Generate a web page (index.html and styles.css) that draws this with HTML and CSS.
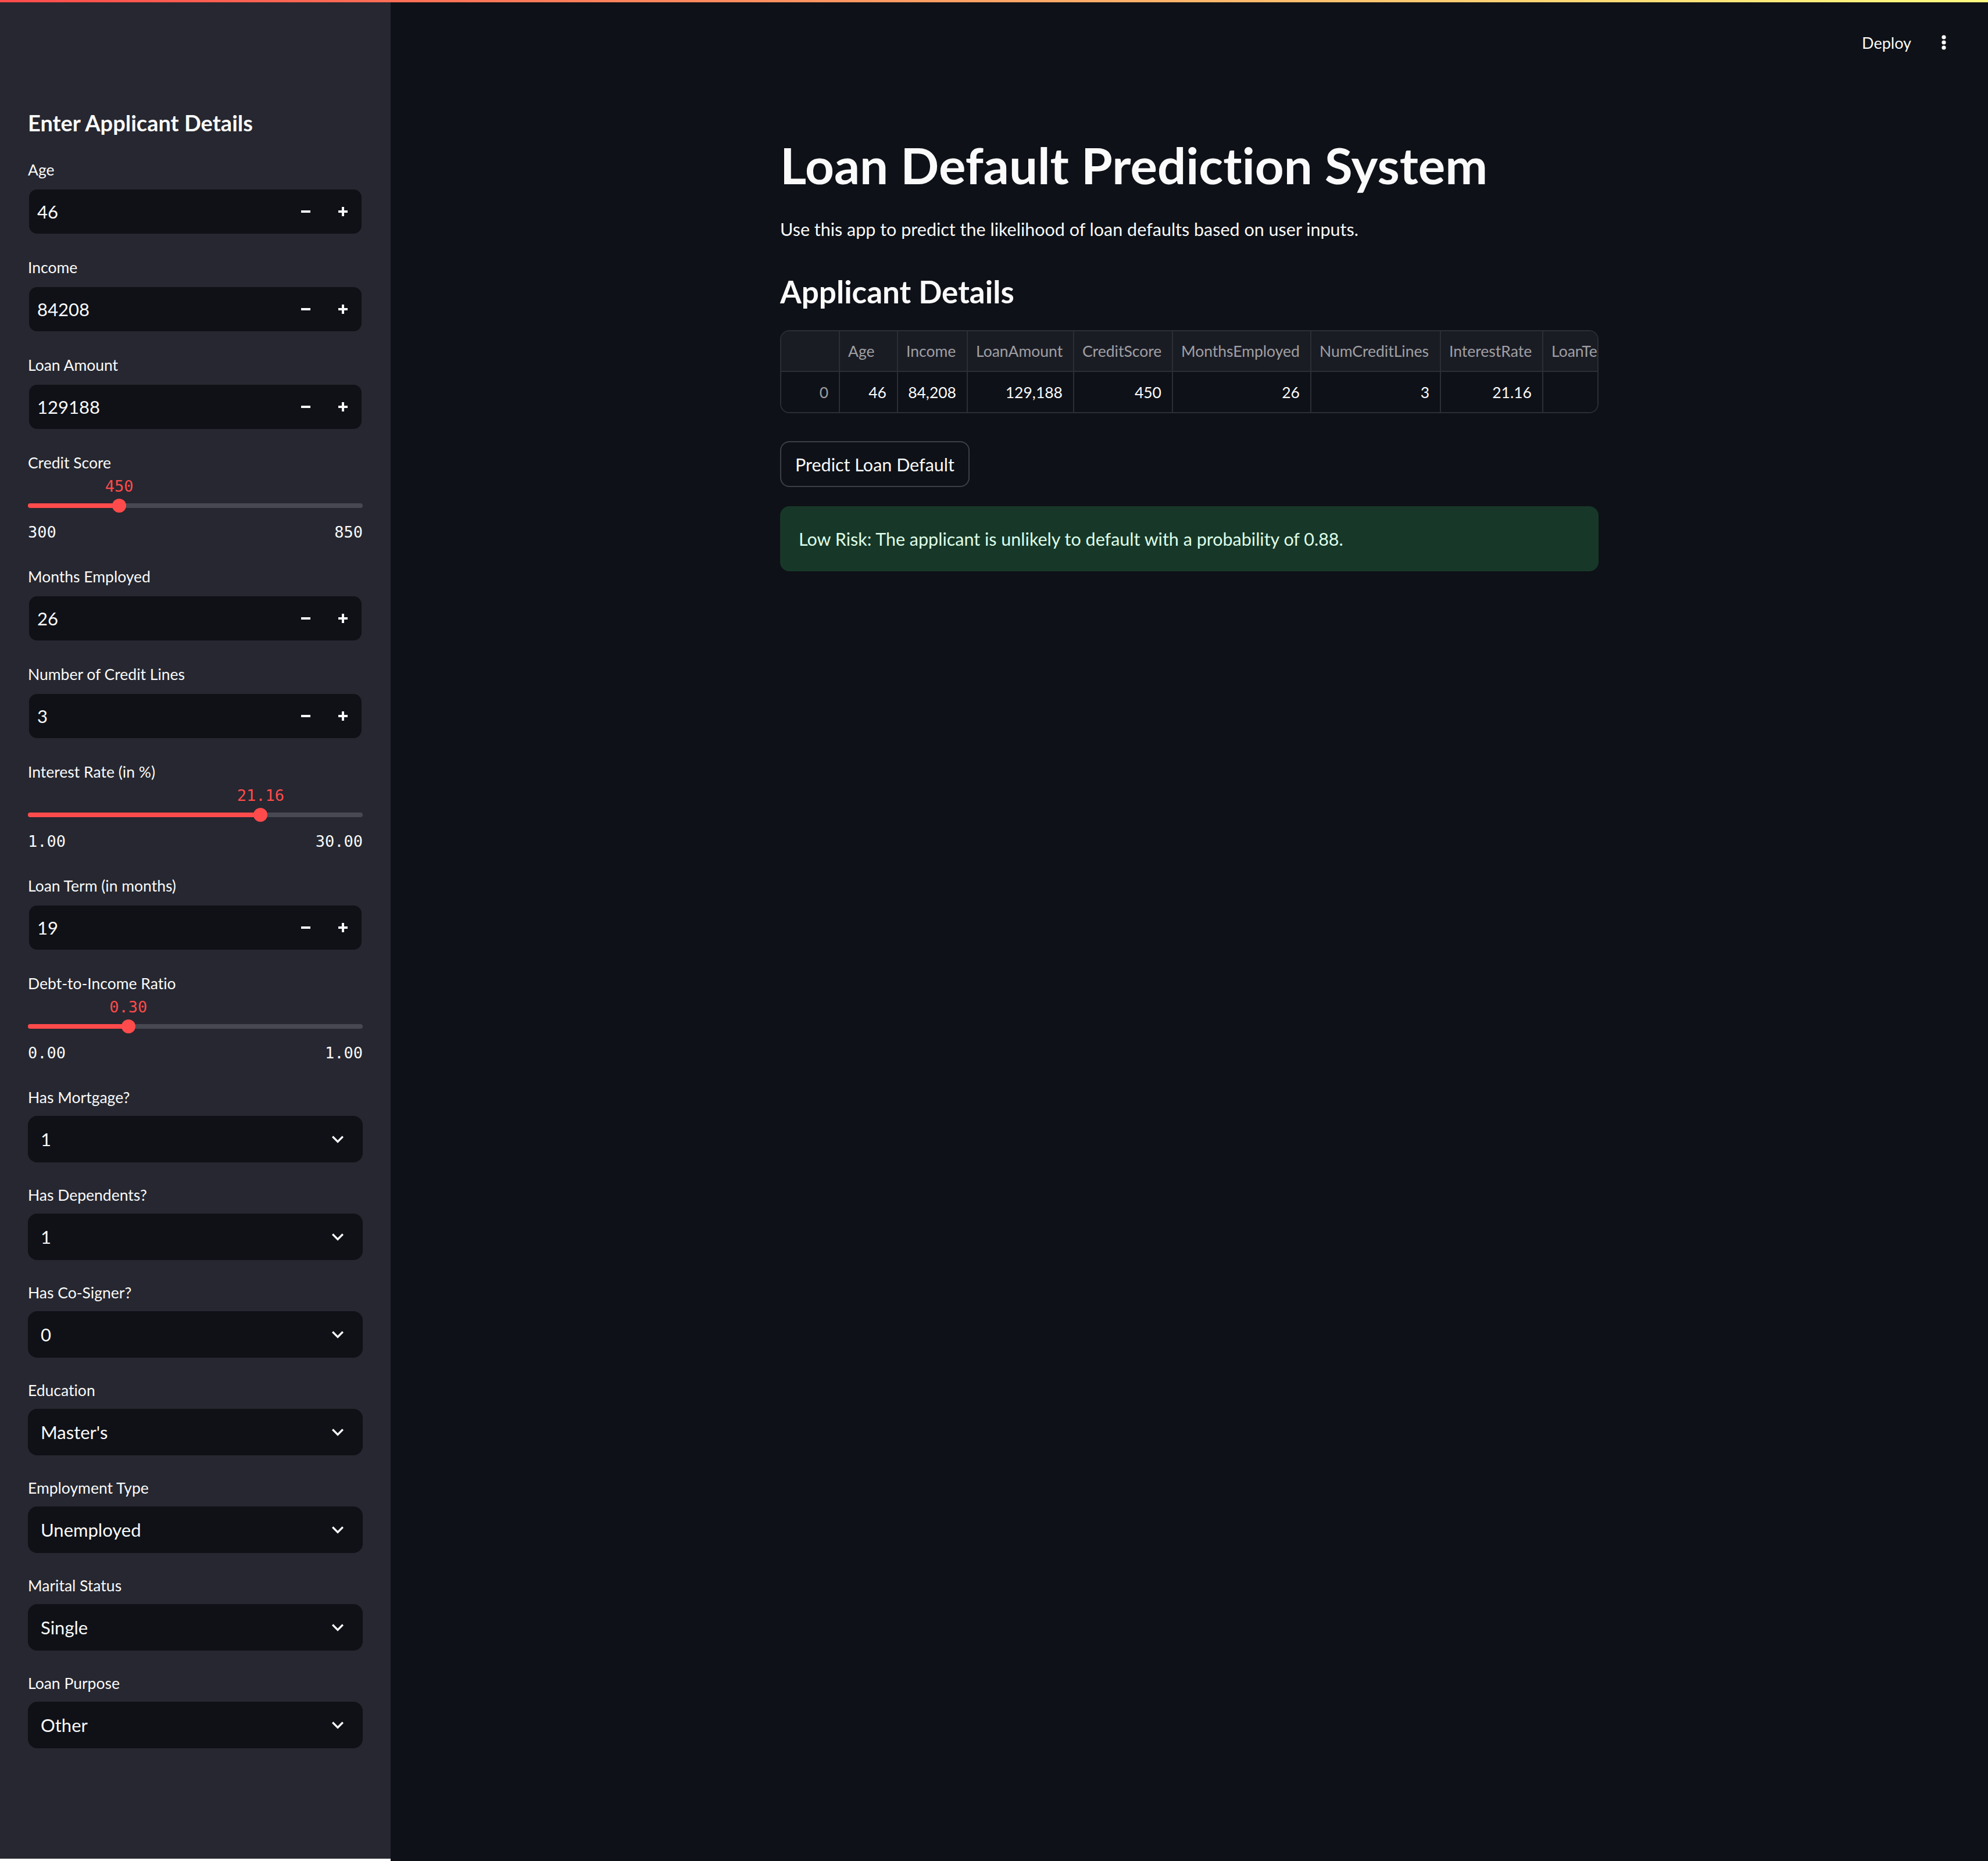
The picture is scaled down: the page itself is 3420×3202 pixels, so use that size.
FILE: index.html
```html
<!DOCTYPE html>
<html lang="en">
<head>
<meta charset="utf-8">
<title>Loan Default Prediction System</title>
<link rel="stylesheet" href="styles.css">
</head>
<body>
<div class="decoration"></div>
<div class="app">
  <aside class="sidebar">
    <h2 class="sb-title">Enter Applicant Details</h2>
    <div class="widgets">

      <div class="widget">
        <div class="label">Age</div>
        <div class="num-input">
          <span class="num-value">46</span>
          <span class="step"><svg width="16" height="16" viewBox="0 0 16 16"><rect x="0" y="6" width="16" height="4" fill="#fafafa"/></svg></span>
          <span class="step"><svg width="16" height="16" viewBox="0 0 16 16"><rect x="0" y="6" width="16" height="4" fill="#fafafa"/><rect x="6" y="0" width="4" height="16" fill="#fafafa"/></svg></span>
        </div>
      </div>

      <div class="widget">
        <div class="label">Income</div>
        <div class="num-input">
          <span class="num-value">84208</span>
          <span class="step"><svg width="16" height="16" viewBox="0 0 16 16"><rect x="0" y="6" width="16" height="4" fill="#fafafa"/></svg></span>
          <span class="step"><svg width="16" height="16" viewBox="0 0 16 16"><rect x="0" y="6" width="16" height="4" fill="#fafafa"/><rect x="6" y="0" width="4" height="16" fill="#fafafa"/></svg></span>
        </div>
      </div>

      <div class="widget">
        <div class="label">Loan Amount</div>
        <div class="num-input">
          <span class="num-value">129188</span>
          <span class="step"><svg width="16" height="16" viewBox="0 0 16 16"><rect x="0" y="6" width="16" height="4" fill="#fafafa"/></svg></span>
          <span class="step"><svg width="16" height="16" viewBox="0 0 16 16"><rect x="0" y="6" width="16" height="4" fill="#fafafa"/><rect x="6" y="0" width="4" height="16" fill="#fafafa"/></svg></span>
        </div>
      </div>

      <div class="widget">
        <div class="label">Credit Score</div>
        <div class="slider">
          <div class="s-top"><span class="s-val" style="left: 27.27%">450</span></div>
          <div class="s-rail">
            <div class="s-track"><div class="s-fill" style="width: 27.27%"></div></div>
            <div class="s-thumb" style="left: 27.27%"></div>
          </div>
          <div class="s-ticks"><span>300</span><span>850</span></div>
        </div>
      </div>

      <div class="widget">
        <div class="label">Months Employed</div>
        <div class="num-input">
          <span class="num-value">26</span>
          <span class="step"><svg width="16" height="16" viewBox="0 0 16 16"><rect x="0" y="6" width="16" height="4" fill="#fafafa"/></svg></span>
          <span class="step"><svg width="16" height="16" viewBox="0 0 16 16"><rect x="0" y="6" width="16" height="4" fill="#fafafa"/><rect x="6" y="0" width="4" height="16" fill="#fafafa"/></svg></span>
        </div>
      </div>

      <div class="widget">
        <div class="label">Number of Credit Lines</div>
        <div class="num-input">
          <span class="num-value">3</span>
          <span class="step"><svg width="16" height="16" viewBox="0 0 16 16"><rect x="0" y="6" width="16" height="4" fill="#fafafa"/></svg></span>
          <span class="step"><svg width="16" height="16" viewBox="0 0 16 16"><rect x="0" y="6" width="16" height="4" fill="#fafafa"/><rect x="6" y="0" width="4" height="16" fill="#fafafa"/></svg></span>
        </div>
      </div>

      <div class="widget">
        <div class="label">Interest Rate (in %)</div>
        <div class="slider">
          <div class="s-top"><span class="s-val" style="left: 69.52%">21.16</span></div>
          <div class="s-rail">
            <div class="s-track"><div class="s-fill" style="width: 69.52%"></div></div>
            <div class="s-thumb" style="left: 69.52%"></div>
          </div>
          <div class="s-ticks"><span>1.00</span><span>30.00</span></div>
        </div>
      </div>

      <div class="widget">
        <div class="label">Loan Term (in months)</div>
        <div class="num-input">
          <span class="num-value">19</span>
          <span class="step"><svg width="16" height="16" viewBox="0 0 16 16"><rect x="0" y="6" width="16" height="4" fill="#fafafa"/></svg></span>
          <span class="step"><svg width="16" height="16" viewBox="0 0 16 16"><rect x="0" y="6" width="16" height="4" fill="#fafafa"/><rect x="6" y="0" width="4" height="16" fill="#fafafa"/></svg></span>
        </div>
      </div>

      <div class="widget">
        <div class="label">Debt-to-Income Ratio</div>
        <div class="slider">
          <div class="s-top"><span class="s-val" style="left: 30%">0.30</span></div>
          <div class="s-rail">
            <div class="s-track"><div class="s-fill" style="width: 30%"></div></div>
            <div class="s-thumb" style="left: 30%"></div>
          </div>
          <div class="s-ticks"><span>0.00</span><span>1.00</span></div>
        </div>
      </div>

      <div class="widget">
        <div class="label">Has Mortgage?</div>
        <div class="select"><span class="sel-value">1</span><svg class="chev" width="40" height="40" viewBox="0 0 24 24"><path d="M16.59 8.59L12 13.17 7.41 8.59 6 10l6 6 6-6z" fill="#fafafa"/></svg></div>
      </div>

      <div class="widget">
        <div class="label">Has Dependents?</div>
        <div class="select"><span class="sel-value">1</span><svg class="chev" width="40" height="40" viewBox="0 0 24 24"><path d="M16.59 8.59L12 13.17 7.41 8.59 6 10l6 6 6-6z" fill="#fafafa"/></svg></div>
      </div>

      <div class="widget">
        <div class="label">Has Co-Signer?</div>
        <div class="select"><span class="sel-value">0</span><svg class="chev" width="40" height="40" viewBox="0 0 24 24"><path d="M16.59 8.59L12 13.17 7.41 8.59 6 10l6 6 6-6z" fill="#fafafa"/></svg></div>
      </div>

      <div class="widget">
        <div class="label">Education</div>
        <div class="select"><span class="sel-value">Master's</span><svg class="chev" width="40" height="40" viewBox="0 0 24 24"><path d="M16.59 8.59L12 13.17 7.41 8.59 6 10l6 6 6-6z" fill="#fafafa"/></svg></div>
      </div>

      <div class="widget">
        <div class="label">Employment Type</div>
        <div class="select"><span class="sel-value">Unemployed</span><svg class="chev" width="40" height="40" viewBox="0 0 24 24"><path d="M16.59 8.59L12 13.17 7.41 8.59 6 10l6 6 6-6z" fill="#fafafa"/></svg></div>
      </div>

      <div class="widget">
        <div class="label">Marital Status</div>
        <div class="select"><span class="sel-value">Single</span><svg class="chev" width="40" height="40" viewBox="0 0 24 24"><path d="M16.59 8.59L12 13.17 7.41 8.59 6 10l6 6 6-6z" fill="#fafafa"/></svg></div>
      </div>

      <div class="widget">
        <div class="label">Loan Purpose</div>
        <div class="select"><span class="sel-value">Other</span><svg class="chev" width="40" height="40" viewBox="0 0 24 24"><path d="M16.59 8.59L12 13.17 7.41 8.59 6 10l6 6 6-6z" fill="#fafafa"/></svg></div>
      </div>

    </div>
  </aside>

  <main class="main">
    <header class="topbar">
      <span class="deploy">Deploy</span>
      <svg class="kebab" width="8" height="26" viewBox="0 0 8 26"><circle cx="4" cy="4" r="3.6" fill="#fafafa"/><circle cx="4" cy="13" r="3.6" fill="#fafafa"/><circle cx="4" cy="22" r="3.6" fill="#fafafa"/></svg>
    </header>

    <div class="block">
      <h1 class="title">Loan Default Prediction System</h1>
      <p class="lead">Use this app to predict the likelihood of loan defaults based on user inputs.</p>
      <h3 class="subheader">Applicant Details</h3>

      <div class="df">
        <div class="th"></div>
        <div class="th">Age</div>
        <div class="th">Income</div>
        <div class="th">LoanAmount</div>
        <div class="th">CreditScore</div>
        <div class="th">MonthsEmployed</div>
        <div class="th">NumCreditLines</div>
        <div class="th">InterestRate</div>
        <div class="th th-cut">LoanTe</div>

        <div class="td idx">0</div>
        <div class="td">46</div>
        <div class="td">84,208</div>
        <div class="td">129,188</div>
        <div class="td">450</div>
        <div class="td">26</div>
        <div class="td">3</div>
        <div class="td">21.16</div>
        <div class="td"></div>
      </div>

      <button class="btn" type="button">Predict Loan Default</button>

      <div class="alert">Low Risk: The applicant is unlikely to default with a probability of 0.88.</div>
    </div>
  </main>
</div>
</body>
</html>
```

FILE: styles.css
```css
* {
  box-sizing: border-box;
}

html, body {
  margin: 0;
  padding: 0;
}

body {
  background: #0e1117;
  color: #fafafa;
  font-family: "Lato", "Noto Sans", sans-serif;
  font-variant-ligatures: none;
  height: 3202px;
  overflow: hidden;
}

.decoration {
  position: absolute;
  top: 0;
  left: 0;
  right: 0;
  height: 4px;
  background: linear-gradient(90deg, #ff4b4b, #fffd80);
  z-index: 10;
}

.app {
  display: flex;
  height: 3202px;
  background: #ffffff;
}

/* ---------- Sidebar ---------- */
.sidebar {
  width: 672px;
  flex: 0 0 672px;
  height: 3198px;
  background: #262730;
  padding: 190px 48px 0 48px;
}

.sb-title {
  margin: 0 0 36px 0;
  font-size: 38px;
  line-height: 42px;
  font-weight: 700;
  color: #fafafa;
}

.widgets {
  display: flex;
  flex-direction: column;
  gap: 32px;
}

.widget {
  display: flex;
  flex-direction: column;
}

.label {
  height: 56px;
  line-height: 48px;
  font-size: 26.5px;
  color: #fafafa;
  white-space: nowrap;
}

.num-input {
  height: 80px;
  display: flex;
  align-items: center;
  background: #0f1117;
  background-clip: padding-box;
  border: 2px solid transparent;
  border-radius: 16px;
  padding-left: 14px;
}

.num-value {
  flex: 1;
  font-size: 31px;
  color: #fafafa;
}

.step {
  width: 64px;
  height: 76px;
  display: flex;
  align-items: center;
  justify-content: center;
}

.step svg {
  display: block;
}

.select {
  height: 80px;
  display: flex;
  align-items: center;
  background: #0f1117;
  border-radius: 16px;
  padding: 0 23px 0 22px;
}

.sel-value {
  flex: 1;
  font-size: 31px;
  color: #fafafa;
}

.chev {
  display: block;
}

/* slider */
.slider {
  height: 108px;
  display: flex;
  flex-direction: column;
}

.s-top {
  position: relative;
  height: 30px;
}

.s-val {
  position: absolute;
  top: 0;
  transform: translateX(-50%);
  font-family: "DejaVu Sans Mono", "Liberation Mono", monospace;
  font-size: 27px;
  line-height: 17px;
  color: #ff4b4b;
  white-space: nowrap;
}

.s-rail {
  position: relative;
  height: 24px;
  display: flex;
  align-items: center;
}

.s-track {
  width: 100%;
  height: 8px;
  border-radius: 4px;
  background: #474852;
  overflow: hidden;
}

.s-fill {
  height: 100%;
  background: #ff4b4b;
}

.s-thumb {
  position: absolute;
  top: 0;
  width: 24px;
  height: 24px;
  border-radius: 50%;
  background: #ff4b4b;
  transform: translateX(-50%);
}

.s-ticks {
  margin-top: 17px;
  display: flex;
  justify-content: space-between;
  font-family: "DejaVu Sans Mono", "Liberation Mono", monospace;
  font-size: 27px;
  line-height: 34px;
  color: #fafafa;
}

/* ---------- Main ---------- */
.main {
  flex: 1;
  height: 3202px;
  background: #0e1117;
  display: flex;
  flex-direction: column;
}

.topbar {
  height: 146px;
  display: flex;
  align-items: center;
  justify-content: flex-end;
  padding-right: 72px;
}

.deploy {
  font-size: 27px;
  color: #fafafa;
  margin-right: 52px;
}

.kebab {
  display: block;
}

.block {
  width: 1408px;
  margin: 0 auto;
  display: flex;
  flex-direction: column;
  align-items: flex-start;
}

.title {
  margin: 86px 0 0 0;
  font-size: 87px;
  line-height: 104px;
  font-weight: 700;
  color: #fafafa;
  white-space: nowrap;
}

.lead {
  margin: 34px 0 0 0;
  font-size: 30.5px;
  line-height: 48px;
  color: #fafafa;
}

.subheader {
  margin: 50px 0 0 0;
  font-size: 53px;
  line-height: 68px;
  font-weight: 700;
  color: #fafafa;
}

.df {
  margin-top: 32px;
  width: 1408px;
  display: grid;
  grid-template-columns: 101px 100px 120px 183px 170px 238px 223px 176px 97px;
  grid-template-rows: 70px 69px;
  border: 2px solid #2c2e36;
  border-radius: 16px;
  overflow: hidden;
  font-size: 26.5px;
}

.th {
  background: #1a1c24;
  border-right: 2px solid #2c2e36;
  border-bottom: 2px solid #2c2e36;
  color: rgba(250, 250, 250, 0.6);
  display: flex;
  align-items: center;
  padding-left: 14px;
  white-space: nowrap;
  overflow: hidden;
}

.th-cut {
  border-right: 0;
}

.td {
  background: #0e1117;
  border-right: 2px solid #2c2e36;
  color: #fafafa;
  display: flex;
  align-items: center;
  justify-content: flex-end;
  padding-right: 18px;
  white-space: nowrap;
}

.td:last-child {
  border-right: 0;
}

.td.idx {
  color: rgba(250, 250, 250, 0.6);
}

.btn {
  margin-top: 48px;
  height: 79px;
  padding: 0 24px;
  background: #0e1117;
  border: 2px solid rgba(250, 250, 250, 0.2);
  border-radius: 16px;
  color: #fafafa;
  font-family: "Lato", "Noto Sans", sans-serif;
  font-variant-ligatures: none;
  font-size: 30.5px;
  cursor: pointer;
}

.alert {
  margin-top: 33px;
  width: 1408px;
  height: 112px;
  display: flex;
  align-items: center;
  padding: 0 32px;
  background: #173828;
  border-radius: 16px;
  color: #dffde9;
  font-size: 30.5px;
}
```
